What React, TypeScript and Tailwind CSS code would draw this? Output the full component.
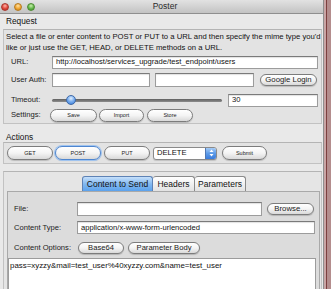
import React from "react";

const FONT = "font-['Liberation_Sans',Arial,sans-serif]";

function Pill({
  className,
  children,
  focus,
}: {
  className: string;
  children: React.ReactNode;
  focus?: boolean;
}) {
  return (
    <div
      className={
        "flex items-center justify-center rounded-full bg-linear-to-b from-white via-[#f4f4f4] to-[#d9d9d9] text-[#222] shadow-[0_1px_1px_rgba(0,0,0,0.18)] whitespace-nowrap " +
        (focus
          ? "border border-[#4f86cf] ring-1 ring-[#9fc3ef] "
          : "border border-[#7c7c7c] ") +
        className
      }
    >
      {children}
    </div>
  );
}

function Field({
  className,
  children,
}: {
  className: string;
  children?: React.ReactNode;
}) {
  return (
    <div
      className={
        "bg-white border border-[#9c9c9c] border-t-[#7a7a7a] shadow-[inset_0_1px_1px_rgba(0,0,0,0.12)] flex items-center pl-[3px] text-[7.6px] text-[#111] whitespace-nowrap overflow-hidden " +
        className
      }
    >
      {children}
    </div>
  );
}

export default function App() {
  return (
    <div className={"flex w-[331px] h-[289px] overflow-hidden bg-[#a98282] " + FONT}>
      <div className="w-[324px] h-full flex flex-col bg-[#e9e9e9] border-r border-[#8e8e8e]">
        {/* Title bar */}
        <div className="h-[14px] shrink-0 flex items-center relative bg-linear-to-b from-[#e2e2e2] to-[#c3c3c3] border-b border-[#8f8f8f]">
          <div className="flex items-center gap-[5px] pl-[1px]">
            <div className="w-[8px] h-[8px] rounded-full border border-[#a8382f] bg-[radial-gradient(circle_at_50%_30%,#ffb3a8,#e0473b_55%,#b3271d)]" />
            <div className="w-[8px] h-[8px] rounded-full border border-[#b57a1f] bg-[radial-gradient(circle_at_50%_30%,#ffe2a3,#f0a531_55%,#c27b14)]" />
            <div className="w-[8px] h-[8px] rounded-full border border-[#4d8a33] bg-[radial-gradient(circle_at_50%_30%,#c8f0ab,#62b74a_55%,#3e8a2c)]" />
          </div>
          <div className="flex-1 text-center text-[8.5px] text-[#2a2a2a] pr-[34px] pl-[6px]">Poster</div>
        </div>

        {/* Request heading */}
        <div className="h-[15px] shrink-0 flex items-center pl-[6px] text-[8.3px] text-[#111]">Request</div>

        {/* Request box */}
        <div className="ml-[3px] mr-[1px] shrink-0 border border-[#c2c2c2] border-t-[#b4b4b4] bg-[#e3e3e3] flex flex-col">
          <div className="pl-[2px] pt-[1px] text-[7.7px] leading-[11px] text-[#111] whitespace-nowrap">
            Select a file or enter content to POST or PUT to a URL and then specify the mime type you'd
            <br />
            like or just use the GET, HEAD, or DELETE methods on a URL.
          </div>
          {/* URL */}
          <div className="mt-[2px] h-[14px] flex items-center pl-[7px]">
            <div className="w-[41px] text-[7.6px] text-[#222]">URL:</div>
            <Field className="w-[266px] h-[13px]">http://localhost/services_upgrade/test_endpoint/users</Field>
          </div>
          {/* User Auth */}
          <div className="mt-[4px] h-[14px] flex items-center pl-[7px]">
            <div className="w-[41px] text-[7.6px] text-[#222]">User Auth:</div>
            <Field className="w-[98px] h-[14px]" />
            <Field className="ml-[5px] w-[99px] h-[14px]" />
            <Pill className="ml-[6px] w-[57px] h-[12px] text-[7.8px]">Google Login</Pill>
          </div>
          {/* Timeout */}
          <div className="mt-[6px] h-[14px] flex items-center pl-[7px]">
            <div className="w-[41px] text-[7.6px] text-[#222]">Timeout:</div>
            <div className="w-[170px] h-[10px] relative flex items-center">
              <div className="w-full h-[3px] rounded-full bg-linear-to-b from-[#5f5f5f] to-[#8e8e8e]" />
              <div className="absolute left-[14px] top-[0px] w-[10px] h-[10px] rounded-full border border-[#3f6aa8] bg-[radial-gradient(circle_at_50%_30%,#e3f0ff,#7fb2f0_45%,#2f74d6)]" />
            </div>
            <Field className="ml-[6px] w-[90px] h-[13px]">30</Field>
          </div>
          {/* Settings */}
          <div className="mt-[1px] h-[14px] flex items-center pl-[7px]">
            <div className="w-[39px] text-[7.6px] text-[#222]">Settings:</div>
            <Pill className="w-[47px] h-[13px] text-[5.5px]">Save</Pill>
            <Pill className="ml-[2px] w-[45px] h-[13px] text-[5.5px]">Import</Pill>
            <Pill className="ml-[3px] w-[46px] h-[13px] text-[5.5px]">Store</Pill>
          </div>
          <div className="h-[1px]" />
        </div>

        {/* Actions heading */}
        <div className="h-[18px] shrink-0 pt-[8px] pl-[6px] text-[8.3px] leading-[10px] text-[#111]">Actions</div>

        {/* Actions box */}
        <div className="ml-[3px] mr-[1px] h-[22px] shrink-0 border border-[#c2c2c2] border-t-[#b4b4b4] bg-[#e3e3e3] flex items-center pl-[3px]">
          <Pill className="w-[46px] h-[14px] text-[5.5px]">GET</Pill>
          <Pill focus className="ml-[2px] w-[46px] h-[14px] text-[5.5px]">POST</Pill>
          <Pill className="ml-[3px] w-[46px] h-[14px] text-[5.5px]">PUT</Pill>
          <div className="ml-[3px] w-[64px] h-[13px] flex rounded-[3px] border border-[#8a8a8a] bg-white overflow-hidden shadow-[0_1px_1px_rgba(0,0,0,0.15)]">
            <div className="flex-1 pl-[3px] flex items-center text-[7.6px] text-[#111]">DELETE</div>
            <div className="w-[11px] flex items-center justify-center border-l border-[#4f78b3] bg-linear-to-b from-[#a6ccf7] via-[#5c9ae8] to-[#3a7bdb]">
              <svg width="5" height="8" viewBox="0 0 5 8">
                <path d="M2.5 0.5 L4.5 3 L0.5 3 Z" fill="#fff" />
                <path d="M2.5 7.5 L4.5 5 L0.5 5 Z" fill="#fff" />
              </svg>
            </div>
          </div>
          <Pill className="ml-[5px] w-[45px] h-[14px] text-[5.5px]">Submit</Pill>
        </div>

        {/* Tab group */}
        <div className="mt-[7px] ml-[3px] mr-[1px] flex-1 flex flex-col border-t border-l border-r border-[#c2c2c2] border-t-[#b4b4b4] bg-[#e5e5e5]">
          <div className="pt-[4px] h-[19px] flex justify-center pl-[3px]">
            <div className="w-[71px] h-[15px] flex items-center justify-center rounded-t-[3px] border border-[#5d82b5] border-b-0 bg-linear-to-b from-[#c6e0fb] via-[#82b8f0] to-[#5ca2ec] text-[8.5px] text-[#111]">
              Content to Send
            </div>
            <div className="w-[42px] h-[15px] flex items-center justify-center rounded-t-[3px] border border-[#8a8a8a] border-b-0 border-l-0 bg-linear-to-b from-white to-[#e2e2e2] text-[8.5px] text-[#111]">
              Headers
            </div>
            <div className="w-[51px] h-[15px] flex items-center justify-center rounded-t-[3px] border border-[#8a8a8a] border-b-0 border-l-0 bg-linear-to-b from-white to-[#e2e2e2] text-[8.5px] text-[#111]">
              Parameters
            </div>
          </div>
          <div className="ml-[3px] mr-[1px] flex-1 flex flex-col border-t border-l border-r border-[#a9a9a9] bg-[#dcdcdc]">
            {/* File */}
            <div className="mt-[10px] h-[14px] flex items-center pl-[6px]">
              <div className="w-[63px] text-[7.6px] text-[#222]">File:</div>
              <Field className="w-[185px] h-[14px]" />
              <Pill className="ml-[5px] w-[47px] h-[12px] text-[7.8px]">Browse...</Pill>
            </div>
            {/* Content Type */}
            <div className="mt-[5px] h-[13px] flex items-center pl-[6px]">
              <div className="w-[63px] text-[7.6px] text-[#222]">Content Type:</div>
              <Field className="w-[238px] h-[13px]">application/x-www-form-urlencoded</Field>
            </div>
            {/* Content Options */}
            <div className="mt-[7px] h-[13px] flex items-center pl-[6px]">
              <div className="w-[64px] text-[7.6px] text-[#222]">Content Options:</div>
              <Pill className="w-[46px] h-[12px] text-[7.6px]">Base64</Pill>
              <Pill className="ml-[4px] w-[72px] h-[12px] text-[7.6px]">Parameter Body</Pill>
            </div>
            {/* Textarea */}
            <div className="mt-[4px] mr-[3px] flex-1 bg-white border border-[#9c9c9c] border-b-0 pl-[1px] pt-[2px] text-[7.9px] leading-[10px] text-[#111] whitespace-nowrap">
              pass=xyzzy&amp;mail=test_user%40xyzzy.com&amp;name=test_user
            </div>
          </div>
        </div>
      </div>
      <div className="flex-1 flex">
        <div className="w-[2px] bg-[#c9a5a5]" />
        <div className="w-[1px] bg-[#7c3f3f]" />
        <div className="flex-1 bg-[#b48d8d]" />
      </div>
    </div>
  );
}
